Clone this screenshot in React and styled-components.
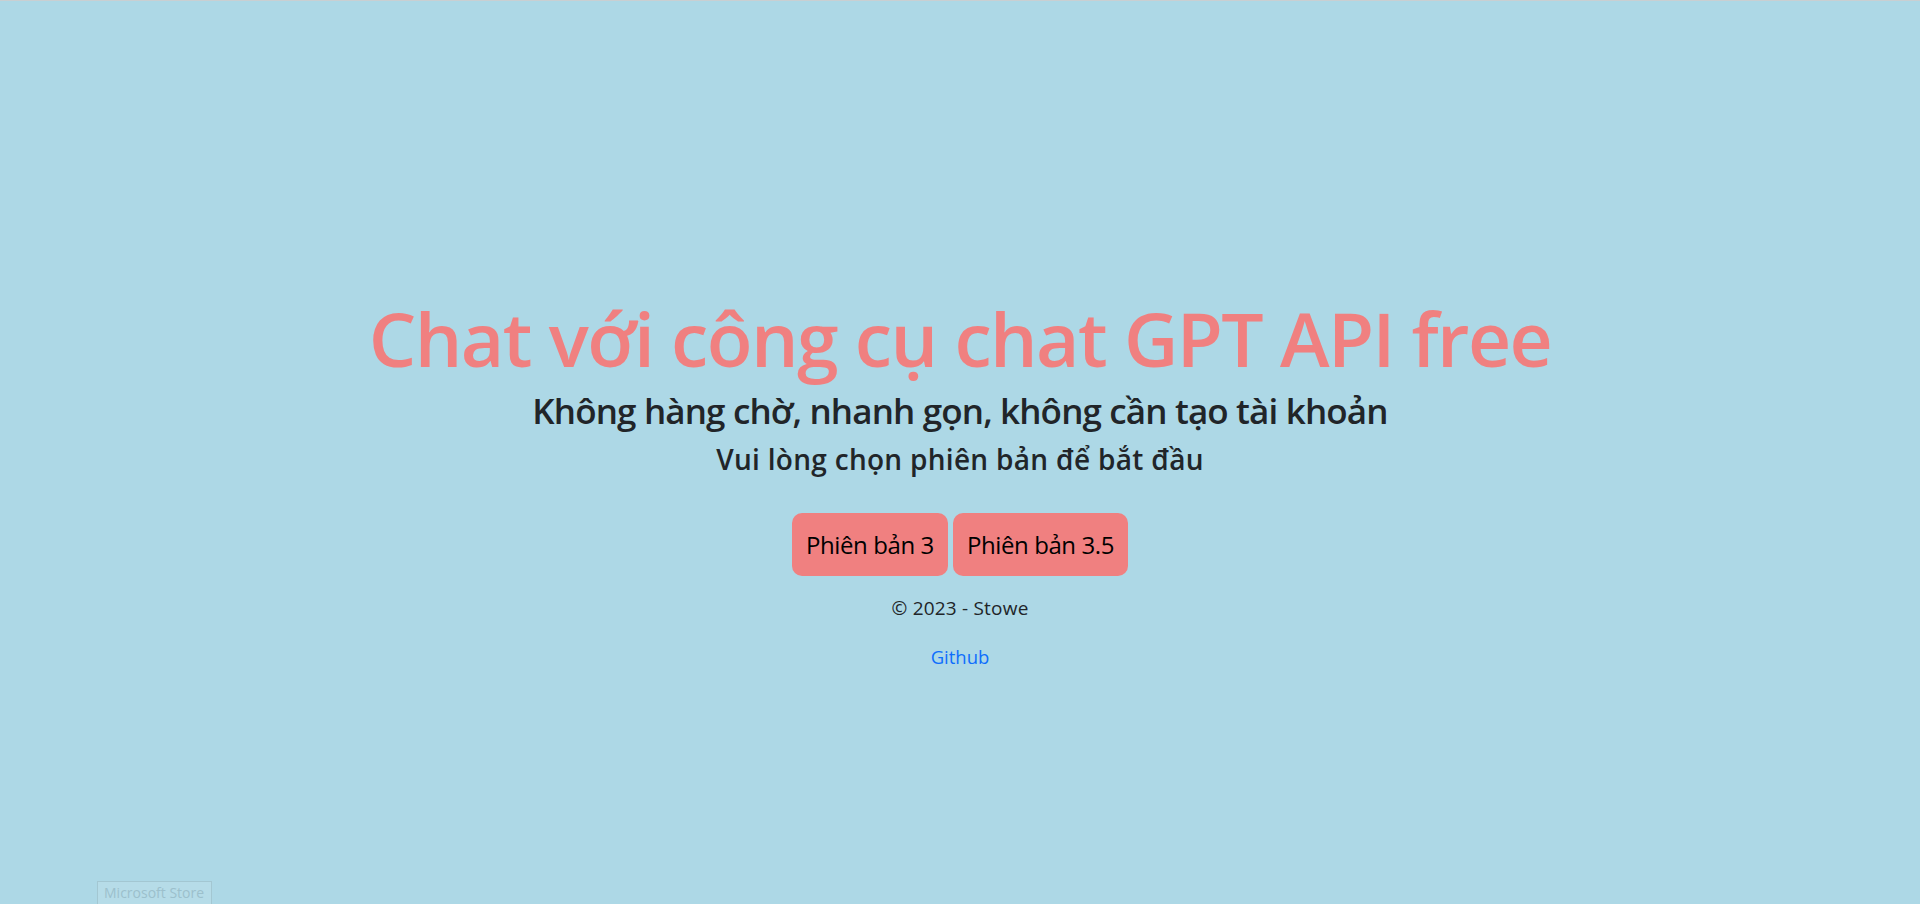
import React from "react";
import styled, { createGlobalStyle } from "styled-components";

const Global = createGlobalStyle`
  html, body { margin: 0; padding: 0; }
  body {
    background: #add8e6;
    font-family: "Open Sans", "Noto Sans", sans-serif;
    color: #212529;
  }
`;

const Page = styled.main`
  min-height: 904px;
  box-sizing: border-box;
  border-top: 1px solid #c9cfd2;
  padding-top: 292px;
  display: flex;
  flex-direction: column;
  align-items: center;
  position: relative;
`;

const Title = styled.h1`
  margin: 0;
  font-size: 75px;
  line-height: 1.2;
  font-weight: 600;
  color: #f08080;
  letter-spacing: -1.6px;
`;

const Subtitle = styled.h2`
  margin: ${(p) => p.$top}px 0 0;
  font-size: ${(p) => p.$size}px;
  line-height: 1.2;
  font-weight: 600;
  color: #212529;
  letter-spacing: ${(p) => p.$ls}px;
`;

const ButtonRow = styled.div`
  margin-top: 36px;
  display: flex;
  gap: 5px;
`;

const VersionButton = styled.button`
  height: 63px;
  padding: 0 14px;
  border: none;
  border-radius: 10px;
  background: #f08080;
  color: #000;
  font-family: inherit;
  font-size: 24px;
  cursor: pointer;
  letter-spacing: -0.4px;
`;

const Footer = styled.p`
  margin: 18px 0 0;
  font-size: 19px;
  line-height: 1.5;
  letter-spacing: 0.2px;
`;

const Link = styled.a`
  margin-top: 21px;
  font-size: 18.5px;
  line-height: 1.5;
  color: #0d6efd;
  text-decoration: none;
`;

const StoreTip = styled.div`
  position: absolute;
  left: 97px;
  bottom: 0;
  height: 22px;
  padding: 0 7px 0 6px;
  border: 1px solid #a3c7d2;
  border-bottom: none;
  background: #b6dce8;
  color: #9cc0cc;
  font-family: "Open Sans", sans-serif;
  font-size: 14px;
  line-height: 22px;
`;

export default function App() {
  return (
    <>
      <Global />
      <Page>
        <Title>Chat với công cụ chat GPT API free</Title>
        <Subtitle $size={35} $top={7} $ls={-0.85}>Không hàng chờ, nhanh gọn, không cần tạo tài khoản</Subtitle>
        <Subtitle $size={28} $top={11} $ls={0.3}>Vui lòng chọn phiên bản để bắt đầu</Subtitle>
        <ButtonRow>
          <VersionButton>Phiên bản 3</VersionButton>
          <VersionButton>Phiên bản 3.5</VersionButton>
        </ButtonRow>
        <Footer>© 2023 - Stowe</Footer>
        <Link href="#">Github</Link>
        <StoreTip>Microsoft Store</StoreTip>
      </Page>
    </>
  );
}
